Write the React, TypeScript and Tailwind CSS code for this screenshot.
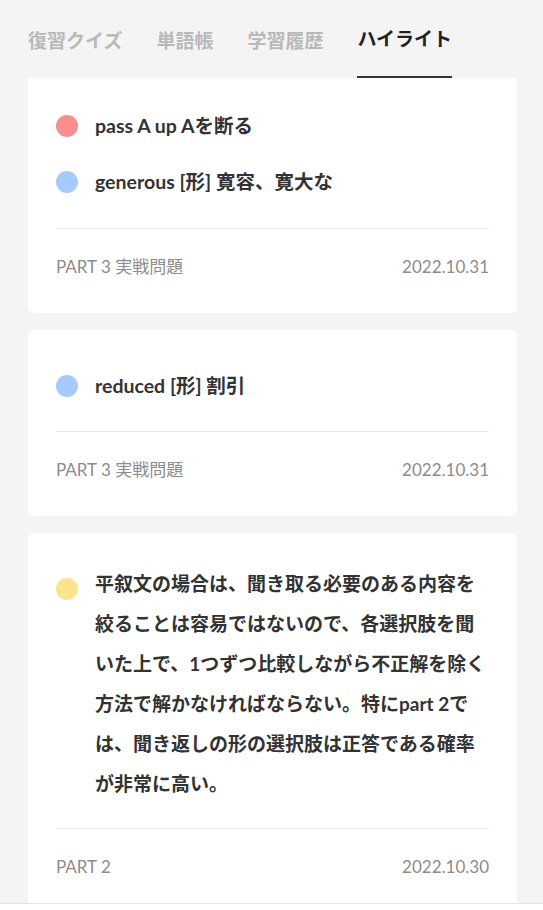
import React from "react";

const font = { fontFamily: 'Lato, "Noto Sans CJK JP", sans-serif' };

function Dot({ color, top }: { color: string; top: string }) {
  return <span className={`shrink-0 w-[22px] h-[22px] rounded-full ${color} ${top}`} />;
}

function Footer({ left, right }: { left: string; right: string }) {
  return (
    <div className="flex justify-between items-center pt-[26px] pb-[34px] text-[17px] leading-6 text-[#8c8c8c]">
      <span>{left}</span>
      <span>{right}</span>
    </div>
  );
}

export default function App() {
  const tabs = ["復習クイズ", "単語帳", "学習履歴", "ハイライト"];
  return (
    <div className="w-[543px] h-[910px] bg-[#f4f4f4] flex flex-col overflow-hidden" style={font}>
      <div className="h-[78px] shrink-0 flex items-stretch gap-[34px] px-[28px]">
        {tabs.map((t, i) => (
          <div
            key={t}
            className={
              i === 3
                ? "flex items-center pt-[2px] text-[19px] font-bold text-[#222] border-b-2 border-[#333]"
                : "flex items-center pt-[4px] text-[19px] font-bold text-[#b9b9b9]"
            }
          >
            {t}
          </div>
        ))}
      </div>
      <div className="flex-1 overflow-hidden pl-[28px] pr-[26px] flex flex-col gap-[17px]">
        <div className="bg-white rounded-b-[6px] px-[28px] shrink-0">
          <div className="pt-[28px] pb-[26px] flex flex-col gap-[16px] border-b border-[#e8e8e8]">
            <div className="flex items-start gap-[17px]">
              <Dot color="bg-[#f98e8e]" top="mt-[9px]" />
              <span className="text-[19.5px] leading-[40px] font-bold text-[#333]">pass A up Aを断る</span>
            </div>
            <div className="flex items-start gap-[17px]">
              <Dot color="bg-[#a6cafb]" top="mt-[9px]" />
              <span className="text-[19.5px] leading-[40px] font-bold text-[#333]">generous [形] 寛容、寛大な</span>
            </div>
          </div>
          <Footer left="PART 3 実戦問題" right="2022.10.31" />
        </div>
        <div className="bg-white rounded-[6px] px-[28px] shrink-0">
          <div className="pt-[36px] pb-[25px] flex flex-col border-b border-[#e8e8e8]">
            <div className="flex items-start gap-[17px]">
              <Dot color="bg-[#a6cafb]" top="mt-[9px]" />
              <span className="text-[19.5px] leading-[40px] font-bold text-[#333]">reduced [形] 割引</span>
            </div>
          </div>
          <Footer left="PART 3 実戦問題" right="2022.10.31" />
        </div>
        <div className="bg-white rounded-t-[6px] px-[28px] shrink-0">
          <div className="pt-[31px] pb-[24px] flex flex-col border-b border-[#e8e8e8]">
            <div className="flex items-start gap-[17px]">
              <Dot color="bg-[#fbe48a]" top="mt-[14px]" />
              <span className="text-[19px] leading-[40px] font-bold text-[#333]">
                平叙文の場合は、聞き取る必要のある内容を絞ることは容易ではないので、各選択肢を聞いた上で、1つずつ比較しながら不正解を除く方法で解かなければならない。特にpart 2では、聞き返しの形の選択肢は正答である確率が非常に高い。
              </span>
            </div>
          </div>
          <Footer left="PART 2" right="2022.10.30" />
        </div>
      </div>
      <div className="h-[7px] shrink-0 bg-white border-t border-[#e6e6e6]" />
    </div>
  );
}
